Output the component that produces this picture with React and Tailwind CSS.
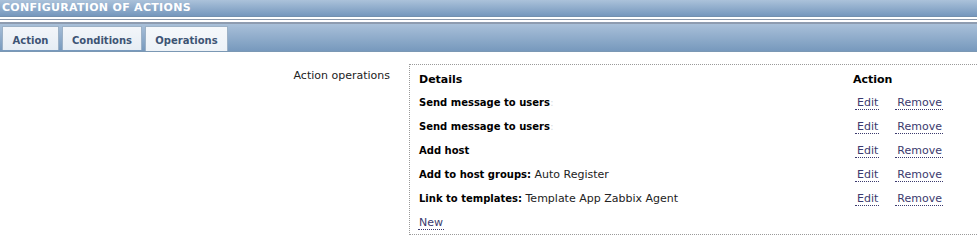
import React from 'react';

const rows = [
    { label: 'Send message to users', rest: ':', faint: true },
    { label: 'Send message to users', rest: ':', faint: true },
    { label: 'Add host', rest: '' },
    { label: 'Add to host groups:', rest: ' Auto Register' },
    { label: 'Link to templates:', rest: ' Template App Zabbix Agent' },
];

function Tab({ children, active = false, width }) {
    return (
        <div
            className={
                'flex items-center justify-center pt-[3px] border border-b-0 border-[#9cb1c6] text-[10px] font-bold text-[#3d5474] ' +
                (active
                    ? 'h-[25px] pb-px bg-gradient-to-b from-[#f5f8fb] to-[#edf2f7]'
                    : 'h-[24px] mb-px bg-gradient-to-b from-[#f3f6fa] to-[#e6edf4]')
            }
            style={{ width }}
        >
            {children}
        </div>
    );
}

function Link({ children, className = '' }) {
    return (
        <span className={'inline-block leading-[13px] border-b border-dotted border-[#3b3a6e] text-[#3b3a6e] ' + className}>
            {children}
        </span>
    );
}

export default function App() {
    return (
        <div className="w-[977px] h-[245px] overflow-hidden bg-white font-['DejaVu_Sans',Verdana,sans-serif] text-black">
            {/* title bar */}
            <div className="h-[17px] bg-gradient-to-b from-[#abc2da] to-[#7597bd] border-b border-[#7390ae] px-[2px] text-[11px] leading-[16px] font-bold text-white tracking-[0.3px] uppercase">
                Configuration of actions
            </div>
            <div className="h-[2px] bg-white" />
            <div className="h-px bg-[#8a98ab]" />
            <div className="h-[2px] bg-white" />
            <div className="h-[2px] bg-[#8e9cb0]" />

            {/* tabs */}
            <div className="h-[28px] flex items-end gap-[3px] pl-[2px] bg-gradient-to-b from-[#a9c0d9] to-[#7799bd] border-b border-[#7b98b4]">
                <Tab width={57}>Action</Tab>
                <Tab width={80}>Conditions</Tab>
                <Tab width={83} active>Operations</Tab>
            </div>

            {/* form */}
            <div className="flex items-start mt-[12px]">
                <div className="w-[390px] shrink-0 pt-[5px] text-right text-[11px] leading-[14px] text-[#222]">
                    Action operations
                </div>
                <div className="ml-[19px] w-[600px] shrink-0 border border-dotted border-[#9a9a9a] pt-[3px] pl-[9px]">
                    <div className="h-[23px] pt-[2px] flex items-center text-[11px] font-bold">
                        <div className="w-[434px]">Details</div>
                        <div>Action</div>
                    </div>
                    {rows.map((r, i) => (
                        <div key={i} className="h-[24px] flex items-center text-[11px]">
                            <div className="w-[434px]">
                                <span className="font-bold text-[10px]">{r.label}</span>
                                {r.rest && (
                                    <span className={r.faint ? 'text-[#d8dde3]' : 'text-[#222]'}>{r.rest}</span>
                                )}
                            </div>
                            <div className="flex items-center">
                                <Link className="ml-[2px] pl-[2px] pr-px">Edit</Link>
                                <Link className="ml-[16px] pl-[2px] pr-px">Remove</Link>
                            </div>
                        </div>
                    ))}
                    <div className="h-[23px] flex items-center text-[11px]">
                        <Link className="-ml-px pl-px pr-px">New</Link>
                    </div>
                </div>
            </div>
        </div>
    );
}
